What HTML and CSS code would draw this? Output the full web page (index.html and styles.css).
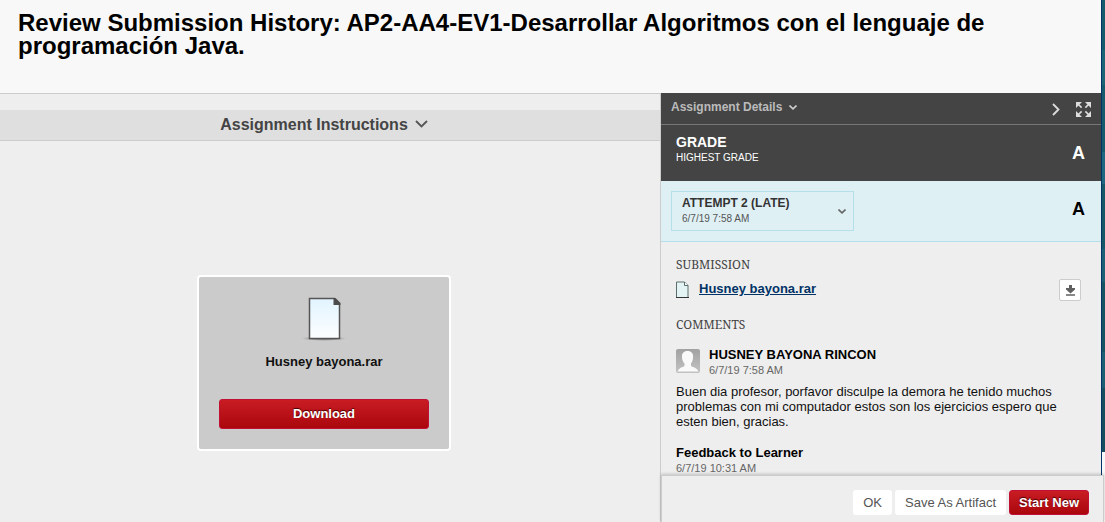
FILE: index.html
```html
<!DOCTYPE html>
<html lang="es">
<head>
<meta charset="utf-8">
<meta name="viewport" content="width=device-width, initial-scale=1">
<title>Review Submission History</title>
<link rel="stylesheet" href="styles.css">
</head>
<body>
<div class="window">
  <div class="page">
    <header class="page-header">
      <h1 class="page-title">Review Submission History: AP2-AA4-EV1-Desarrollar Algoritmos con el lenguaje de programación Java.</h1>
    </header>
    <div class="columns">
      <main class="viewer">
        <button type="button" class="instructions">Assignment Instructions
          <svg width="13" height="8" viewBox="0 0 13 8" fill="none" stroke="#555" stroke-width="1.800" aria-hidden="true"><path d="M1 1l5.500 5.500L12 1"/></svg>
        </button>
        <div class="preview">
          <section class="file-card">
            <svg class="file-art" width="46" height="45" viewBox="0 0 46 45" aria-hidden="true">
              <defs>
                <linearGradient id="paper" x1="0" y1="0" x2="0" y2="1"><stop offset="0" stop-color="#e2f4ff"/><stop offset="1" stop-color="#fcfeff"/></linearGradient>
                <radialGradient id="shade"><stop offset="0" stop-color="#555"/><stop offset=".6" stop-color="#888" stop-opacity=".7"/><stop offset="1" stop-color="#aaa" stop-opacity="0"/></radialGradient>
              </defs>
              <ellipse cx="23" cy="41.500" rx="23" ry="2.500" fill="url(#shade)"/>
              <path d="M8.500 1.500h25l5 5v35h-30z" fill="url(#paper)" stroke="#555" stroke-width="1.500"/>
              <path d="M32.500 1h2l5 5v2h-7z" fill="#4c4c4c"/>
            </svg>
            <p class="file-name">Husney bayona.rar</p>
            <button type="button" class="primary wide">Download</button>
          </section>
        </div>
      </main>
      <aside class="side">
        <div class="side-bar">
          <button type="button" class="details">Assignment Details
            <svg width="8" height="5" viewBox="0 0 8 5" fill="none" stroke="#ccc" stroke-width="1.600" aria-hidden="true"><path d="M.5 .5L4 3.800 7.500 .5"/></svg>
          </button>
          <div class="tools">
            <button type="button" class="tool" aria-label="Collapse panel">
              <svg width="8" height="13" viewBox="0 0 8 13" fill="none" stroke="#ddd" stroke-width="1.800" aria-hidden="true"><path d="M1 1l5.500 5.500L1 12"/></svg>
            </button>
            <button type="button" class="tool" aria-label="Full screen">
              <svg width="15" height="15" viewBox="0 0 15 15" fill="#ddd" stroke="#ddd" aria-hidden="true">
                <path stroke="none" d="M0 0h6L0 6zM15 0v6L9 0zM0 15V9l6 6zM15 15H9l6-6z"/>
                <path stroke-width="1.600" d="M2 2l3.600 3.600M13 2L9.400 5.600M2 13l3.600-3.600M13 13L9.400 9.400"/>
              </svg>
            </button>
          </div>
        </div>
        <section class="grade">
          <div>
            <h2 class="grade-title">GRADE</h2>
            <p class="grade-note">HIGHEST GRADE</p>
          </div>
          <span class="mark">A</span>
        </section>
        <section class="attempt">
          <button type="button" class="attempt-picker">
            <span class="attempt-text"><strong class="attempt-name">ATTEMPT 2 (LATE)</strong><span class="attempt-date">6/7/19 7:58 AM</span></span>
            <svg width="8" height="5" viewBox="0 0 8 5" fill="none" stroke="#666" stroke-width="1.600" aria-hidden="true"><path d="M.5 .5L4 3.800 7.500 .5"/></svg>
          </button>
          <span class="mark">A</span>
        </section>
        <div class="side-body">
          <h3 class="label">SUBMISSION</h3>
          <div class="file-row">
            <svg width="13" height="17" viewBox="0 0 13 17" aria-hidden="true">
              <path d="M.5 1h8l3.500 3.500v12H.5z" fill="#e4f3f4" stroke="#5a6e6d"/>
              <path d="M8.500 1v3.500H12" fill="#fff" stroke="#5a6e6d"/>
              <path d="M0 16.500h13" stroke="#333"/>
            </svg>
            <a class="file-link" href="#">Husney bayona.rar</a>
            <button type="button" class="download" aria-label="Download file">
              <svg width="9" height="11" viewBox="0 0 9 11" aria-hidden="true"><path fill="#606060" d="M3 0h3v3h3v1.500L4.500 8.500 0 4.500V3h3z"/><path fill="#888" d="M0 9h9v2H0z"/></svg>
            </button>
          </div>
          <h3 class="label">COMMENTS</h3>
          <div class="author">
            <svg width="24" height="24" viewBox="0 0 24 24" aria-hidden="true">
              <defs><linearGradient id="avatar" x1="0" y1="0" x2="0" y2="1"><stop offset="0" stop-color="#a2a2a2"/><stop offset="1" stop-color="#c2c2c2"/></linearGradient></defs>
              <rect width="24" height="24" rx="2" fill="url(#avatar)"/>
              <path fill="#fafafa" d="M11.500 2c4 0 5.800 2.500 5.600 6-.2 4-1.300 5.300-2.100 6.500V17c2 1.500 6 1.500 7.500 5.500h-21C3 18.500 6.500 18.500 8.500 17v-2.500C7.500 13.300 6.200 12 6 8c-.2-3.500 1.500-6 5.500-6z"/>
            </svg>
            <div>
              <h4 class="person">HUSNEY BAYONA RINCON</h4>
              <p class="date">6/7/19 7:58 AM</p>
            </div>
          </div>
          <p class="comment">Buen dia profesor, porfavor disculpe la demora he tenido muchos problemas con mi computador estos son los ejercicios espero que esten bien, gracias.</p>
          <h4 class="person">Feedback to Learner</h4>
          <p class="date">6/7/19 10:31 AM</p>
        </div>
      </aside>
    </div>
  </div>
  <div class="backdrop"></div>
  <footer class="actions">
    <button type="button" class="plain">OK</button>
    <button type="button" class="plain">Save As Artifact</button>
    <button type="button" class="primary">Start New</button>
  </footer>
</div>
</body>
</html>
```
FILE: styles.css
```css
* { box-sizing: border-box; }
body { margin: 0; font-family: "Liberation Sans", Arial, sans-serif; font-size: 13px; line-height: 15px; color: #111; }
h1, h2, h3, h4, p { margin: 0; }
button { margin: 0; padding: 0; border: 0; background: none; font: inherit; color: inherit; cursor: pointer; }
svg { display: block; flex: none; }

.window { position: relative; display: flex; height: 100vh; overflow: hidden; }
.page { flex: 1; min-width: 0; display: flex; flex-direction: column; background: #eee; }
.backdrop {
  flex: none;
  width: 4px;
  border-left: 1px solid #003366;
  background: linear-gradient(#165b6c 50px, #1c6478 50px 85px, #165b6c 85px 152px, #1f6680 152px 184px, #165868 184px 249px, #1c6078 249px 282px, #165464 282px 352px, #1c5f75 352px 388px, #174f61 388px 452px, #f8f8f8 452px);
}

.page-header { padding: 11px 18px 36px; background: #f8f8f8; }
.page-title { font-size: 24px; line-height: 23px; color: #000; }
.columns { flex: 1; min-height: 0; display: flex; }

.viewer { flex: 1; min-width: 0; padding-top: 16px; border-top: 1px solid #ccc; }
.instructions { display: flex; align-items: center; justify-content: center; gap: 7px; width: 100%; height: 31px; padding: 0 12px 2px 0; border-bottom: 1px solid #ccc; background: #dfdfdf; color: #444; font-size: 16px; font-weight: bold; }
.preview { display: flex; justify-content: center; padding: 134px 12px 0 0; }
.file-card { display: flex; flex-direction: column; align-items: center; width: 254px; padding: 20px; border: 2px solid #fff; border-radius: 4px; background: #cbcbcb; }
.file-name { margin: 12px 0 30px; font-weight: bold; }

.primary { height: 25px; padding: 0 9px; border: 1px solid #c01035; border-radius: 3px; background: linear-gradient(#c91c23, #aa070d); color: #fff; font-weight: bold; text-shadow: 0 -1px 1px #400; }
.wide { width: 100%; height: 30px; padding-bottom: 2px; }

.side { flex: 0 0 440px; min-width: 0; box-sizing: content-box; border-left: 1px solid #ccc; overflow: hidden; }
.side-bar { display: flex; justify-content: space-between; height: 32px; padding: 0 10px; border-bottom: 1px solid #777; background: #444; }
.details { display: flex; align-items: center; gap: 7px; height: 28px; color: #bbb; font-size: 12px; font-weight: bold; }
.tools { display: flex; align-items: center; gap: 16px; padding-top: 2px; }
.grade, .attempt { display: flex; align-items: center; justify-content: space-between; padding: 10px 16px 10px 15px; }
.grade { height: 56px; background: #444; color: #fff; }
.grade > div { align-self: flex-start; }
.grade-title { font-size: 14px; line-height: 15px; }
.grade-note { font-size: 10px; }
.mark { font-size: 18px; line-height: 20px; font-weight: bold; }
.attempt { height: 61px; padding-left: 10px; border-bottom: 1px solid #b5deeb; background: #dff0f5; color: #000; }
.attempt .mark { padding-bottom: 4px; }
.attempt-picker { display: flex; align-items: center; justify-content: space-between; width: 183px; height: 40px; padding: 0 7px 0 10px; border: 1px solid #b5e0ea; text-align: left; }
.attempt-text { display: flex; flex-direction: column; }
.attempt-name { font-size: 12px; color: #333; }
.attempt-date { font-size: 10px; color: #555; }

.side-body { padding: 15px 20px 0 15px; }
.label { font-family: "Noto Serif", "Liberation Serif", serif; font-size: 12px; font-weight: normal; color: #444; }
.file-row { display: flex; align-items: center; height: 22px; margin: 7px 0 16px; }
.file-link { margin-left: 10px; padding-bottom: 3px; font-weight: bold; color: #036; }
.file-row > svg { margin-bottom: 2px; }
.download { display: grid; place-items: center; width: 22px; height: 22px; padding-top: 1px; margin-left: auto; border: 1px solid #ccc; border-radius: 2px; background: #fff; }
.author { display: flex; align-items: flex-start; gap: 9px; margin: 15px 0 6px; }
.author > svg { margin-top: 2px; }
.person { font-size: 13px; line-height: 16px; color: #000; }
.date { font-size: 11px; color: #666; }
.comment { margin-bottom: 16px; }

.actions { position: absolute; right: 1px; bottom: 0; display: flex; gap: 3px; width: 443px; height: 47px; padding: 14px 14px 0 0; justify-content: flex-end; border: solid #ccc; border-width: 1px 1px 0; background: #eee; box-shadow: 0 -1px 3px rgba(0, 0, 0, .2); }
.plain { height: 25px; padding: 0 10px; border-radius: 3px; background: #fff; color: #555; }
```
